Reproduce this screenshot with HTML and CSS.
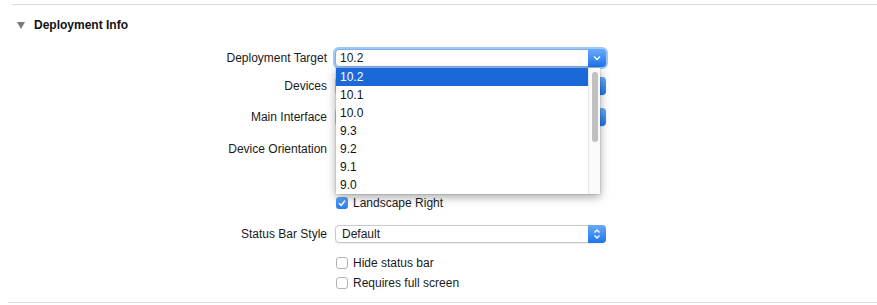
FILE: index.html
```html
<html>
<head>
  <meta charset="utf-8">
  <title>Deployment Info</title>
  <link rel="stylesheet" href="styles.css">
</head>
<body>
  <div id="panel">
    <div class="rule top"></div>
    <div class="header">
      <span class="disclosure"></span>
      <span class="title">Deployment Info</span>
    </div>

    <div class="form">
      <div class="row r-target">
        <label class="label">Deployment Target</label>
        <div class="control">
          <div class="popup focused">
            <span class="value">10.2</span>
            <span class="stepper">
              <svg width="10" height="8" viewBox="0 0 10 8"><path d="M2 2.5 L5 5.5 L8 2.5" fill="none" stroke="#fff" stroke-width="1.4"/></svg>
            </span>
          </div>
          <div class="menu">
            <div class="item selected">10.2</div>
            <div class="item">10.1</div>
            <div class="item">10.0</div>
            <div class="item">9.3</div>
            <div class="item">9.2</div>
            <div class="item">9.1</div>
            <div class="item">9.0</div>
            <div class="track"><div class="thumb"></div></div>
          </div>
        </div>
      </div>

      <!-- values of the next rows sit under the open menu -->
      <div class="row r-devices">
        <label class="label">Devices</label>
        <div class="control">
          <div class="popup">
            <span class="value"></span>
            <span class="stepper">
              <svg width="10" height="14" viewBox="0 0 10 14"><path d="M2.5 5.5 L5 3 L7.5 5.5 M2.5 8.5 L5 11 L7.5 8.5" fill="none" stroke="#fff" stroke-width="1.3"/></svg>
            </span>
          </div>
        </div>
      </div>

      <div class="row r-main">
        <label class="label">Main Interface</label>
        <div class="control">
          <div class="popup">
            <span class="value"></span>
            <span class="stepper">
              <svg width="10" height="14" viewBox="0 0 10 14"><path d="M2.5 5.5 L5 3 L7.5 5.5 M2.5 8.5 L5 11 L7.5 8.5" fill="none" stroke="#fff" stroke-width="1.3"/></svg>
            </span>
          </div>
        </div>
      </div>

      <div class="row r-orient">
        <label class="label">Device Orientation</label>
        <div class="control checks">
          <div class="check"><span class="box on"><svg width="10" height="10" viewBox="0 0 10 10"><path d="M2 5.2 L4.2 7.4 L8 2.6" fill="none" stroke="#fff" stroke-width="1.6"/></svg></span></div>
          <div class="check"><span class="box"></span></div>
          <div class="check"><span class="box on"><svg width="10" height="10" viewBox="0 0 10 10"><path d="M2 5.2 L4.2 7.4 L8 2.6" fill="none" stroke="#fff" stroke-width="1.6"/></svg></span></div>
          <div class="check"><span class="box on"><svg width="10" height="10" viewBox="0 0 10 10"><path d="M2 5.2 L4.2 7.4 L8 2.6" fill="none" stroke="#fff" stroke-width="1.6"/></svg></span>Landscape Right</div>
        </div>
      </div>

      <div class="row r-status">
        <label class="label">Status Bar Style</label>
        <div class="control">
          <div class="popup">
            <span class="value">Default</span>
            <span class="stepper">
              <svg width="10" height="14" viewBox="0 0 10 14"><path d="M2.5 5.5 L5 3 L7.5 5.5 M2.5 8.5 L5 11 L7.5 8.5" fill="none" stroke="#fff" stroke-width="1.3"/></svg>
            </span>
          </div>
        </div>
      </div>

      <div class="row r-hide">
        <span class="label"></span>
        <div class="control">
          <div class="check"><span class="box"></span>Hide status bar</div>
        </div>
      </div>

      <div class="row r-full">
        <span class="label"></span>
        <div class="control">
          <div class="check"><span class="box"></span>Requires full screen</div>
        </div>
      </div>
    </div>

    <div class="rule bottom"></div>
  </div>
</body>
</html>
```

FILE: styles.css
```css
body {
  margin: 0;
  background-color: #ffffff;
  color: #1a1a1a;
  font-family: "Liberation Sans", Arial, sans-serif;
  font-size: 12px;
}
#panel {
  padding-top: 4px;
}
.rule {
  height: 1px;
  background-color: #dcdcdc;
}
.rule.top {
  margin-left: 12px;
}
.rule.bottom {
  margin-left: 8px;
  margin-top: 10px;
}
.header {
  display: flex;
  align-items: center;
  height: 16px;
  margin-top: 12px;
  padding-left: 17px;
}
.disclosure {
  width: 0;
  height: 0;
  border-left: 4px solid transparent;
  border-right: 4px solid transparent;
  border-top: 7px solid #7a7a7a;
  margin-right: 9px;
}
.title {
  font-weight: bold;
  color: #111111;
}
.form {
  display: flex;
  flex-direction: column;
  margin-top: 16px;
}
.row {
  display: flex;
  align-items: flex-start;
}
.label {
  width: 327px;
  text-align: right;
  line-height: 18px;
  height: 18px;
  flex-shrink: 0;
}
.control {
  position: relative;
  margin-left: 8px;
  width: 271px;
}
.r-devices { margin-top: 10px; }
.r-main { margin-top: 13px; }
.r-orient { margin-top: 14px; }
.r-status { margin-top: 13px; }
.r-hide { margin-top: 11px; }
.r-full { margin-top: 2px; }
.popup {
  display: flex;
  align-items: stretch;
  height: 18px;
  box-sizing: border-box;
  border: 1px solid #c9c9c9;
  border-radius: 4px;
  background-color: #ffffff;
  box-shadow: 0 0.5px 1px rgba(0, 0, 0, 0.08);
}
.popup .value {
  flex: 1;
  line-height: 16px;
  padding-left: 6px;
}
.popup.focused {
  border-color: #7fb0ea;
  box-shadow: 0 0 0 2px #9cc6f7;
}
.popup.focused .value {
  padding-left: 4px;
}
.stepper {
  width: 18px;
  margin: -1px -1px -1px 0;
  border-radius: 0 4px 4px 0;
  background: linear-gradient(#67aaf9, #1f73ec);
  display: flex;
  align-items: center;
  justify-content: center;
}
.menu {
  position: absolute;
  left: 1px;
  top: 19px;
  width: 264px;
  background-color: #ffffff;
  box-shadow: 0 3px 9px rgba(0, 0, 0, 0.35), 0 0 0 0.5px rgba(0, 0, 0, 0.15);
  z-index: 2;
}
.item {
  height: 18px;
  line-height: 18px;
  padding-left: 4px;
  margin-right: 12px;
  color: #111111;
}
.item.selected {
  background-color: #1b69d9;
  color: #ffffff;
}
.track {
  position: absolute;
  top: 0;
  right: 0;
  bottom: 0;
  width: 11px;
  background-color: #fafafa;
  border-left: 1px solid #e6e6e6;
}
.thumb {
  position: absolute;
  left: 3px;
  top: 4px;
  width: 6px;
  height: 70px;
  border-radius: 3px;
  background-color: #c1c1c1;
}
.checks {
  display: flex;
  flex-direction: column;
}
.check {
  display: flex;
  align-items: center;
  height: 18px;
  line-height: 18px;
}
.box {
  width: 12px;
  height: 12px;
  box-sizing: border-box;
  border: 1px solid #b3b3b3;
  border-radius: 3px;
  background-color: #ffffff;
  margin-left: 1px;
  margin-right: 5px;
  display: flex;
  align-items: center;
  justify-content: center;
}
.box.on {
  border: none;
  background: linear-gradient(#5ea5f8, #2a7ef0);
}
```
